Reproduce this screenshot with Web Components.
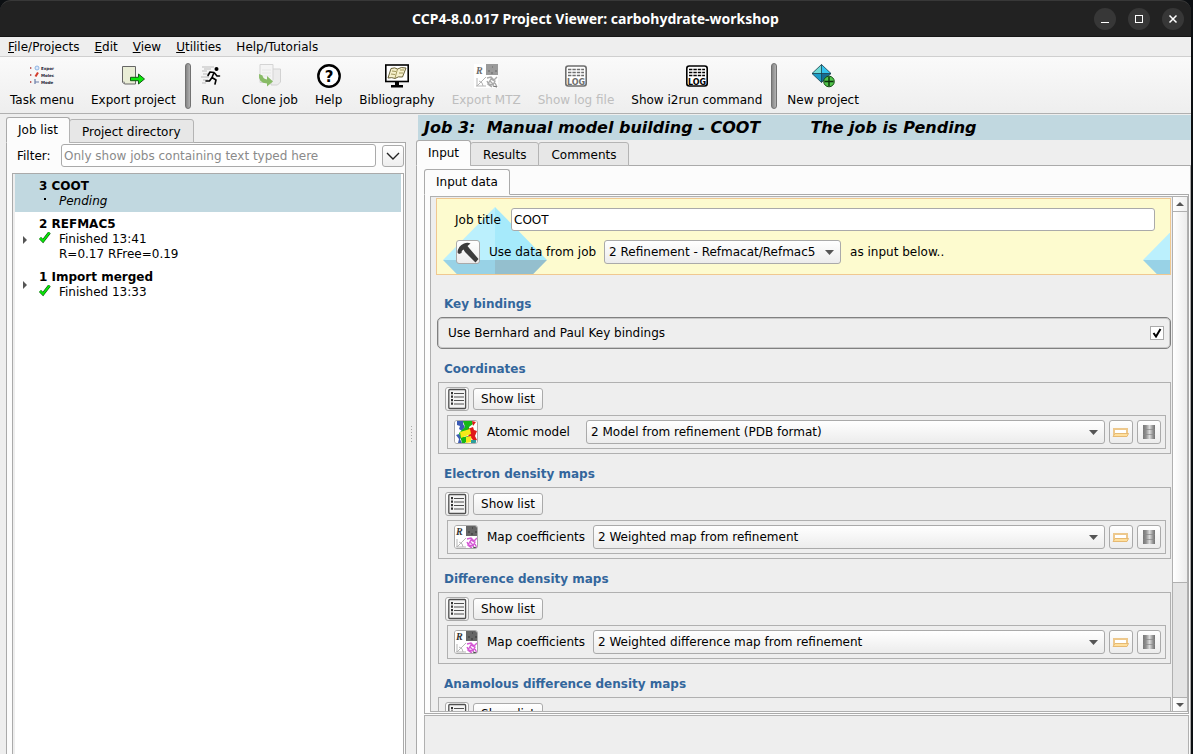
<!DOCTYPE html>
<html lang="en">
<head>
<meta charset="utf-8">
<title>CCP4 Project Viewer</title>
<style>
html, body { margin: 0; height: 100%; }
body { background: #0c0f12; font: 12px/16px "DejaVu Sans", "Liberation Sans", sans-serif; color: #000; overflow: hidden; }
</style>
</head>
<body>
<project-window></project-window>
<script>
const BASE = `*{box-sizing:border-box}button,input,select{font:inherit;color:inherit;margin:0}button{background:none;border:0;padding:0}a{color:inherit;text-decoration:none}svg{display:block}`;
function element(name, css, html) {
  customElements.define(name, class extends HTMLElement {
    constructor() {
      super();
      const root = this.attachShadow({ mode: 'open' });
      const body = typeof html === 'function' ? html(this) : html;
      root.innerHTML = `<style>${BASE}${css}</style>${body}`;
    }
  });
}

const logBox = c => `<svg viewBox="0 0 24 24"><rect x="1.8" y="2" width="20.4" height="20" rx="2.5" fill="#fff" stroke="${c}" stroke-width="1.6"/><path d="M4 5.5h16M4 8.500h16M4 11.500h16" stroke="${c}" stroke-width="1.3" stroke-dasharray="3.4 1"/><text x="12" y="20.6" text-anchor="middle" font-family="DejaVu Sans" font-weight="bold" font-size="8" fill="${c}">LOG</text></svg>`;
const mtz = c => `<svg viewBox="0 0 24 24"><path d="M0 0h24v24H0z" fill="#fff"/><path d="M12 0h12v11H12z" fill="${c[0]}"/><path d="M14 7h2m2-4h1m2 4h2m-6 2h2" stroke="${c[1]}" stroke-width="2" opacity=".5"/><text x="2" y="9.500" font-family="Liberation Serif" font-style="italic" font-weight="bold" font-size="10" fill="${c[1]}">R</text><path d="M3 22V14M2 22h10M3 22L12 13M5 17q4 1 4 5" stroke="#b5b5b5" fill="none"/><path d="M13 14l4-1 3 3 3-3M14 20l3-5 4 2-2 4zM16 17l3 3M21 19l2 4M13 17l2 4 3 2" stroke="${c[2]}" stroke-width="1.4" fill="none"/><path d="M19 22l4 1" stroke="${c[1]}"/></svg>`;
const ICONS = {
  tasks: `<svg viewBox="0 0 24 24" overflow="visible"><path d="M0 3l2 1-2 1zM0 10l2 1-2 1zM0 17l2 1-2 1z" fill="#a33"/><circle cx="7" cy="4" r="2" fill="#dce8fa" stroke="#79a7de" stroke-width=".8"/><path d="M5.500 12.500L8 8.500" stroke="#d43b2b" stroke-width="2"/><path d="M5 15v5M5 18h4" stroke="#6b7da8" stroke-width="1.200"/><g font-family="DejaVu Sans" font-weight="bold" font-size="4" fill="#223"><text x="11" y="5.500">Expor</text><text x="11" y="12.500">Molec</text><text x="11" y="19.500">Mode</text></g></svg>`,
  export: `<svg viewBox="0 0 24 24"><path d="M1.500 2.500h13v17.500h-11l-2-2z" fill="#e9edd6" stroke="#666"/><path d="M1.500 18l2 2v-2z" fill="#fff" stroke="#666" stroke-width=".6"/><path d="M9.500 13.300h8v-3.300l6 5-6 5v-3.300h-8z" fill="#0ce80c" stroke="#155a15"/></svg>`,
  run: `<svg viewBox="0 0 24 24"><path d="M1 3h12M3 5h7M1 7h5M2 10h5M0 13h8M2 16h5M1 19h4" stroke="#bbb" stroke-width="1"/><circle cx="15.500" cy="5" r="2" fill="#000"/><path d="M13 8.500L9 8 7 11.500M13 8.500l-2 5 4 2.500-1 4M11 13.500L8.500 17H5M13.500 9l2.500 3h2.500" fill="none" stroke="#000" stroke-width="1.600" stroke-linejoin="round" stroke-linecap="round"/></svg>`,
  clone: `<svg viewBox="0 0 24 24"><path d="M13 5h9.500v13l-3 3H13z" fill="#ececec" stroke="#d2d2d2"/><path d="M2 .5h13v15l-3 3H2z" fill="#f4f4f4" stroke="#d4d4d4"/><path d="M4 6h9M4 9h9M4 12h9" stroke="#e6e6e6"/><path d="M1 10L4.500 11.500Q5 15 9 15.500V12l6 5.500L9 22.500V19.500Q0 19 1 10z" fill="#88bb66"/></svg>`,
  help: `<svg viewBox="0 0 24 24"><circle cx="12" cy="12" r="10.700" fill="#fff" stroke="#000" stroke-width="2.400"/><text x="12" y="17.500" text-anchor="middle" font-family="DejaVu Sans" font-weight="bold" font-size="15">?</text></svg>`,
  biblio: `<svg viewBox="0 0 24 24"><rect x=".8" y="1" width="22.400" height="16.500" fill="#fff" stroke="#000" stroke-width="1.600"/><path d="M10 18h4v3h4v2.500H6V21h4z"/><path d="M3 14L6 4.500Q10 3 12.500 5 16 2.500 21 4L17.500 13Q13 12 10 14.500 7 13 3 14z" fill="#f6f0cc" stroke="#5a5226" stroke-width=".9"/><path d="M12.500 5L10 14M7 7l4 .5M6 10l4 .5M15 6h4M14 9h4" stroke="#8a803f" stroke-width=".8"/></svg>`,
  mtzoff: mtz(['#9a9a9a', '#6a6a6a', '#aaa']),
  mtz: mtz(['#666', '#333', '#d558d5']),
  logoff: logBox('#6e6e6e'), log: logBox('#000'),
  crystal: `<svg viewBox="0 0 24 24"><path d="M10.500.5V9.500H1z" fill="#6fdbd5"/><path d="M10.500.5L20 9.500H10.500z" fill="#34c3ee"/><path d="M1 9.500h9.500v9z" fill="#1c9cc8"/><path d="M20 9.500h-9.500v9z" fill="#176c92"/><path d="M10.500.5L20 9.500 10.500 18.500 1 9.500zM1 9.500h19M10.500.5v18" fill="none" stroke="#123c4d" stroke-width=".8"/><circle cx="18" cy="17.500" r="5.300" fill="#52c44c" stroke="#174d17"/><path d="M18 13v9M13.500 17.500h9" stroke="#0b330b" stroke-width="1.400"/></svg>`,
  hammer: `<svg viewBox="0 0 24 24"><path d="M1.500 12.500Q2 6 8 3.500q3.500-1.500 6.500 0L11.500 6l2 2.500 9 10.500-3 3.500L9 12 7.500 9.500 5.800 11 5.500 13 3 14z" fill="#3c3c3c"/></svg>`,
  list: `<svg viewBox="0 0 24 24"><rect x="3.800" y="2.500" width="16.800" height="19" rx="1" fill="#f4f4f4" stroke="#505050" stroke-width="1.300"/><path d="M9 6.500h10M9 10h10M9 13.500h10M9 17h10" stroke="#505050" stroke-width="1.200"/><path d="M7 5v14" stroke="#333" stroke-width="2" stroke-dasharray="2.300 1.200"/></svg>`,
  model: `<svg viewBox="0 0 24 24"><path d="M1 1h22v22H1z" fill="#fff"/><path d="M3 1h7l-1 3 2 3-3 4-3-2 1-3-3-1zM2 15l3-1 3 3-2 2 2 4H4l1-4z" fill="#3b5bb5"/><path d="M9 1h9l1 3-4 3 1 5-5 2-5 3-1-4 3-3 3-3zM6 16l4 1 4-1 1 3-4 4H8z" fill="#16b816"/><path d="M14 9l5-2 1 3 3 1-2 5 2 4-3 1-3-3-4 1 2-5zM18 1l4 1-3 4z" fill="#e01818"/><path d="M6 12l10-3 1 5-10 4zM12 17l5-1 1 6-6 1z" fill="#f6e81a"/><path d="M17 20h5v3h-5z" fill="#2c9c9c"/></svg>`,
  folder: `<svg viewBox="0 0 24 24"><path d="M5 15V9h13v5" fill="#fff" stroke="#edc88c" stroke-width="2"/><path d="M4 16.500l2-3h13.500l-1.500 3z" fill="#ffdf9c" stroke="#e6b972"/></svg>`,
  database: `<svg viewBox="0 0 24 24"><defs><linearGradient id="m"><stop offset="0" stop-color="#777"/><stop offset=".25" stop-color="#909090"/><stop offset=".55" stop-color="#ddd"/><stop offset=".8" stop-color="#999"/><stop offset="1" stop-color="#707070"/></linearGradient></defs><path d="M6 5h12v14H6z" fill="url(#m)"/><path d="M6 9.500h12M6 14.500h12" stroke="#888" stroke-width=".7"/></svg>`,
  tick: `<svg viewBox="0 0 12 12"><path d="M1 6l3 3 6.500-8.500" fill="none" stroke="#0a4f0a" stroke-width="3"/><path d="M1 6l3 3 6.500-8.500" fill="none" stroke="#0be60b" stroke-width="2"/></svg>`,
  dot: `<svg viewBox="0 0 12 12"><path d="M5 4h2v2H5z"/></svg>`
};
element('app-icon', `:host{display:block;width:24px;height:24px;flex:none}:host([small]){width:12px;height:12px}svg{width:100%;height:100%}`,
  el => ICONS[el.getAttribute('name')]);

element('title-bar', `
:host{display:grid;grid-template-columns:120px 1fr 120px;align-items:center;height:37px;background:#222;color:#fff;border-top:1px solid #383838;border-bottom:1px solid #151515;border-radius:11px 11px 0 0}
h1{grid-column:2;margin:0;text-align:center;font:bold 14px/20px "Noto Sans","Open Sans",sans-serif;white-space:nowrap}
div{display:flex;gap:12px;justify-content:flex-end;padding-right:7px}
button{width:22px;height:22px;border-radius:50%;background:#373737}`,
`<h1>CCP4-8.0.017 Project Viewer: carbohydrate-workshop</h1>
<div><button aria-label="Minimize"><svg width="22" height="22"><path d="M7 14.500h8" stroke="#fff"/></svg></button>
<button aria-label="Maximize"><svg width="22" height="22"><rect x="7.500" y="7.500" width="7" height="7" fill="none" stroke="#fff"/></svg></button>
<button aria-label="Close"><svg width="22" height="22"><path d="M7.500 7.500l7 7m0-7l-7 7" stroke="#fff" stroke-width="1.500"/></svg></button></div>`);

element('menu-bar', `
:host{display:block;background:#eee;border-bottom:1px solid #cfcfcf}
nav{display:flex;gap:15px;padding:2px 8px 1px}`,
`<nav><a href="#file"><u>F</u>ile/Projects</a><a href="#edit"><u>E</u>dit</a><a href="#view"><u>V</u>iew</a><a href="#util"><u>U</u>tilities</a><a href="#help">Help/Tutorials</a></nav>`);

element('tool-button', `
:host{display:block}
button{display:flex;flex-direction:column;align-items:center;gap:4px;padding:0 8px 0 9px;white-space:nowrap}
button:disabled{color:#bebebe}`,
el => `<button ${el.hasAttribute('disabled') ? 'disabled' : ''}><app-icon name="${el.getAttribute('icon')}"></app-icon><span><slot></slot></span></button>`);

element('tool-bar', `
:host{display:flex;align-items:flex-start;padding:7px 0 5px 1px;background:linear-gradient(#fafafa,#eee);border-bottom:1px solid #b0b0b0}
hr{flex:none;width:6px;height:46px;margin:-1px 1px;border:1px solid #727272;border-radius:3px;background:linear-gradient(90deg,#858585,#b2b2b2)}`,
`<tool-button icon="tasks">Task menu</tool-button><tool-button icon="export">Export project</tool-button><hr>
<tool-button icon="run">Run</tool-button><tool-button icon="clone">Clone job</tool-button><tool-button icon="help">Help</tool-button><tool-button icon="biblio">Bibliography</tool-button><tool-button icon="mtzoff" disabled>Export MTZ</tool-button><tool-button icon="logoff" disabled>Show log file</tool-button><tool-button icon="log">Show i2run command</tool-button><hr><tool-button icon="crystal">New project</tool-button>`);

element('tab-strip', `
:host{display:flex;align-items:flex-end;position:relative;z-index:1;margin-bottom:-1px}`, `<slot></slot>`);
element('tab-item', `
:host{display:block;margin-left:-1px}
button{height:24px;padding:1px 12px 0;border:1px solid #b4b4b4;border-radius:3px 3px 0 0;background:#e7e7e7;white-space:nowrap}
:host([selected]){margin-left:0}
:host([selected]) button{height:26px;padding:0 11px;border-bottom-color:#fcfcfc;background:#fcfcfc;border-color:#aaa #aaa #fcfcfc}`,
el => `<button role="tab" aria-selected="${el.hasAttribute('selected')}"><slot></slot></button>`);

element('job-item', `
:host{display:grid;grid-template-columns:24px 1fr;padding:5px 0 3px;line-height:15px}
:host([selected]){background:#c1d8e0}
.arrow{align-self:center;justify-self:start;margin-left:7px}
h3{margin:0;font-size:12px;line-height:15px}
div{display:grid;grid-template-columns:12px 1fr;column-gap:8px}`,
el => `${el.hasAttribute('parent') ? '<svg class="arrow" width="6" height="8"><path d="M1 0l4 4-4 4z" fill="#555"/></svg>' : '<span></span>'}
<section><h3>${el.getAttribute('label')}</h3><div><app-icon small name="${el.getAttribute('state')}"></app-icon><span><slot></slot></span></div></section>`);

element('job-panel', `
:host{display:flex;flex-direction:column;width:400px;flex:none;padding-top:3px;min-height:0}
.pane{flex:1;display:flex;flex-direction:column;border:1px solid #aaa;border-bottom:0;background:#fcfcfc;padding:1px 1px 0 5px;min-height:0}
.filter{display:flex;align-items:center;padding-left:5px}
label{width:44px}
input{flex:1;min-width:0;height:23px;border:1px solid #aaa;border-radius:3px;padding:0 3px 0 2px;background:#fff;outline:0}
input::placeholder{color:#8a8a8a;opacity:1}
.drop{margin-left:6px;width:22px;height:22px;border:1px solid #aaa;border-radius:3px;background:linear-gradient(#fff,#eee);display:grid;place-items:center}
.tree{flex:1;margin-top:6px;border:1px solid #aaa;border-bottom:0;background:linear-gradient(90deg,#eee 2px,#fff 2px);padding:0 2px;min-height:0}`,
`<tab-strip><tab-item selected>Job list</tab-item><tab-item>Project directory</tab-item></tab-strip>
<div class="pane"><div class="filter"><label for="f">Filter:</label><input id="f" placeholder="Only show jobs containing text typed here"><button class="drop" aria-label="Filter options"><svg width="14" height="8"><path d="M1 1l6 6 6-6" fill="none" stroke="#222" stroke-width="1.400"/></svg></button></div>
<div class="tree"><job-item selected label="3 COOT" state="dot"><i>Pending</i></job-item>
<job-item parent label="2 REFMAC5" state="tick">Finished 13:41<br>R=0.17 RFree=0.19</job-item>
<job-item parent label="1 Import merged" state="tick">Finished 13:33</job-item></div></div>`);

element('pane-splitter', `:host{display:grid;place-items:center;width:10px;flex:none}`,
`<svg width="3" height="18"><path d="M1.500 1v17" stroke="#aaa" stroke-dasharray="1 2"/></svg>`);

element('combo-box', `
:host{display:grid}
select,svg{grid-area:1/1}
select{appearance:none;width:100%;height:24px;padding:0 24px 0 4px;border:1px solid #aaa;border-radius:3px;background:linear-gradient(#fff,#ececec);outline:0}
svg{align-self:center;justify-self:end;margin-right:7px;pointer-events:none}`,
el => `<select aria-label="${el.getAttribute('label')}"><option>${el.getAttribute('value')}</option></select><svg width="9" height="5"><path d="M0 0h9L4.500 5z" fill="#555"/></svg>`);

element('icon-button', `
:host{display:block;flex:none}
button{width:24px;height:24px;border:1px solid #aaa;border-radius:3px;background:linear-gradient(#fff,#ececec);display:grid;place-items:center;overflow:hidden}
app-icon{margin:-1px}`,
el => `<button aria-label="${el.getAttribute('label')}"><app-icon name="${el.getAttribute('icon')}"></app-icon></button>`);

element('job-source', `
:host{display:block;position:relative;margin:1px 0 9px 5px;border:1px solid #f0c890;background:#fdfbcf;padding:9px 15px 10px 18px;overflow:hidden}
.art{position:absolute;top:0;left:0}
.row{position:relative;display:flex;align-items:center}
.row+.row{margin-top:9px}
label[for=t]{width:56px}
input{flex:1;min-width:0;height:23px;border:1px solid #aaa;border-radius:3px;padding:0 2px;background:#fff;outline:0}
.use{margin:0 8px 0 9px}
combo-box{width:237px}
.tail{margin-left:9px}
icon-button{margin-left:1px}`,
`<svg class="art" width="1500" height="75" aria-hidden="true"><defs><g id="d"><path d="M58 8v53H6z" fill="#bbf0fd"/><path d="M58 8l52 53H58z" fill="#a6eafb"/><path d="M6 61h52v53z" fill="#98d2e6"/><path d="M110 61H58v53z" fill="#94bfce"/></g></defs><use href="#d"/><use href="#d" x="700"/></svg>
<div class="row"><label for="t">Job title</label><input id="t" value="COOT"></div>
<div class="row"><icon-button icon="hammer" label="Tools"></icon-button><span class="use">Use data from job</span><combo-box label="Use data from job" value="2 Refinement - Refmacat/Refmac5"></combo-box><span class="tail">as input below..</span></div>`);

element('section-title', `
:host{display:block}h2{margin:0;padding:12px 0 4px 13px;font-size:12px;line-height:17px;color:#33669c}`, `<h2><slot></slot></h2>`);

element('key-bindings', `
:host{display:block;margin-left:6px}
label{display:flex;justify-content:space-between;align-items:center;height:32px;padding:0 6px 0 10px;border:1px solid #808080;border-radius:5px;box-shadow:inset 0 0 0 1px #c8c8c8}
span{display:grid}
input,svg{grid-area:1/1}
input{appearance:none;width:14px;height:14px;border:1px solid #aaa;background:#fff}
svg{pointer-events:none;place-self:center}`,
`<label>Use Bernhard and Paul Key bindings<span><input type="checkbox" checked><svg width="10" height="10"><path d="M1.500 5l2.500 3.500 4.500-7.500" fill="none" stroke="#000" stroke-width="2"/></svg></span></label>`);

element('data-group', `
:host{display:block;margin-left:7px}
section{border:1px solid #b0b0b0;padding:4px}
.head{display:flex;align-items:center;gap:4px;padding-left:2px}
.head button{height:22px;width:70px;border:1px solid #aaa;border-radius:3px;background:linear-gradient(#fff,#ececec)}
.body{display:flex;align-items:center;gap:4px;margin:4px 0 0 4px;border:1px solid #b0b0b0;padding:4px 4px 4px 6px}
.name{min-width:91px;margin:0 4px 0 5px;white-space:nowrap}
combo-box{flex:1}`,
el => `<section><div class="head"><icon-button icon="list" label="List"></icon-button><button>Show list</button></div>
<div class="body"><icon-button icon="${el.getAttribute('icon')}" label="Data type"></icon-button><span class="name">${el.getAttribute('label')}</span><combo-box label="${el.getAttribute('label')}" value="${el.getAttribute('value')}"></combo-box><icon-button icon="folder" label="Open file"></icon-button><icon-button icon="database" label="Database"></icon-button></div></section>`);

element('scroll-rail', `
:host{display:flex;flex-direction:column;width:15px;flex:none;border-left:1px solid #b0b0b0;background:#e4e4e4}
button{height:14px;flex:none;background:linear-gradient(90deg,#fff,#f0f0f0);display:grid;place-items:center}
.thumb{flex:372;border:solid #b0b0b0;border-width:1px 0;background:linear-gradient(90deg,#fff,#ececec)}
.rest{flex:115}
.down{border-top:1px solid #b0b0b0}`,
`<button aria-label="Scroll up"><svg width="8" height="4"><path d="M0 4h8L4 0z" fill="#555"/></svg></button><div class="thumb"></div><div class="rest"></div><button class="down" aria-label="Scroll down"><svg width="8" height="4"><path d="M0 0h8L4 4z" fill="#555"/></svg></button>`);

element('job-view', `
:host{display:flex;flex-direction:column;flex:1;min-width:0;min-height:0;padding-top:1px}
h1{margin:0 0 0 2px;padding:0 6px;font:italic bold 16px/25px "DejaVu Sans",sans-serif;background:#c1d8e0;white-space:pre}
.outer{flex:1;display:flex;flex-direction:column;min-height:0;border:1px solid #aaa;border-bottom:0;background:#fcfcfc;padding:3px 1px 0 7px}
.inner{flex:1;display:flex;min-height:0;border:1px solid #aaa;padding:1px 0 1px 5px}
.area{flex:1;display:flex;min-width:0;border:1px solid #b0b0b0;background:#eee}
.content{flex:1;min-width:0;overflow:hidden;padding-right:1px}
.foot{flex:none;height:39px;margin-top:1px;border:1px solid #b0b0b0;border-bottom:0;background:#eee}`,
`<h1>Job 3:  Manual model building - COOT         The job is Pending</h1>
<tab-strip><tab-item selected>Input</tab-item><tab-item>Results</tab-item><tab-item>Comments</tab-item></tab-strip>
<div class="outer"><tab-strip><tab-item selected>Input data</tab-item></tab-strip>
<div class="inner"><div class="area"><div class="content">
<job-source></job-source>
<section-title>Key bindings</section-title><key-bindings></key-bindings>
<section-title>Coordinates</section-title><data-group icon="model" label="Atomic model" value="2 Model from refinement (PDB format)"></data-group>
<section-title>Electron density maps</section-title><data-group icon="mtz" label="Map coefficients" value="2 Weighted map from refinement"></data-group>
<section-title>Difference density maps</section-title><data-group icon="mtz" label="Map coefficients" value="2 Weighted difference map from refinement"></data-group>
<section-title>Anamolous difference density maps</section-title><data-group icon="mtz" label="Map coefficients" value=""></data-group>
</div><scroll-rail></scroll-rail></div></div><div class="foot"></div></div>`);

element('project-window', `
:host{display:flex;flex-direction:column;height:100vh;margin-right:2px}
main{flex:1;display:flex;min-height:0;background:#eee;padding-left:6px}`,
`<title-bar></title-bar><menu-bar></menu-bar><tool-bar></tool-bar><main><job-panel></job-panel><pane-splitter></pane-splitter><job-view></job-view></main>`);
</script>
</body>
</html>
